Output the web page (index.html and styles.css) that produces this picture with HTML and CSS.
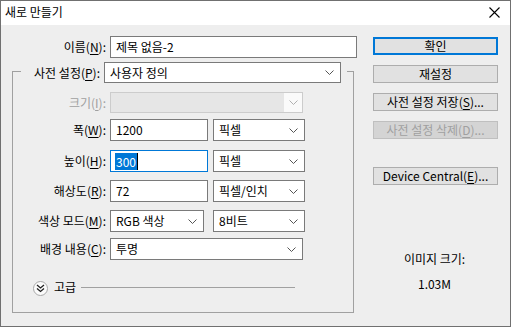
FILE: index.html
```html
<!DOCTYPE html>
<html>
    <head>
        <meta http-equiv="Content-Type" content="text/html; charset=utf-8" />
        <title>새로 만들기</title>
        <link rel="stylesheet" href="styles.css">
    </head>
    <body>
        <div class="dialog">
            <div class="titlebar">
                <span class="title">새로 만들기</span>
                <svg class="close" width="11" height="11" viewBox="0 0 11 11">
                    <path d="M0.5 0.5 L10.5 10.5 M10.5 0.5 L0.5 10.5" stroke="#000" stroke-width="1.1" fill="none"/>
                </svg>
            </div>
            <div class="content">
                <div class="main">
                    <div class="row name-row">
                        <span class="lbl">이름(<u>N</u>):</span>
                        <div class="field name-field">제목 없음-2</div>
                    </div>
                    <div class="group">
                        <div class="row preset-row">
                            <span class="lbl">사전 설정(<u>P</u>):</span>
                            <div class="field select preset-field">사용자 정의<svg class="arrow" width="9" height="5" viewBox="0 0 9 5"><polyline points="0.5,0.5 4.5,4.5 8.5,0.5"/></svg></div>
                        </div>
                        <div class="row size-row">
                            <span class="lbl disabled">크기(<u>I</u>):</span>
                            <div class="field select off long"><span class="arrow-box"><svg class="arrow" width="9" height="5" viewBox="0 0 9 5"><polyline points="0.5,0.5 4.5,4.5 8.5,0.5"/></svg></span></div>
                        </div>
                        <div class="row width-row">
                            <span class="lbl">폭(<u>W</u>):</span>
                            <div class="field num">1200</div>
                            <div class="field select unit">픽셀<svg class="arrow" width="9" height="5" viewBox="0 0 9 5"><polyline points="0.5,0.5 4.5,4.5 8.5,0.5"/></svg></div>
                        </div>
                        <div class="row height-row">
                            <span class="lbl">높이(<u>H</u>):</span>
                            <div class="field num focus"><span class="sel">300</span><span class="caret"></span></div>
                            <div class="field select unit">픽셀<svg class="arrow" width="9" height="5" viewBox="0 0 9 5"><polyline points="0.5,0.5 4.5,4.5 8.5,0.5"/></svg></div>
                        </div>
                        <div class="row res-row">
                            <span class="lbl">해상도(<u>R</u>):</span>
                            <div class="field num">72</div>
                            <div class="field select unit">픽셀/인치<svg class="arrow" width="9" height="5" viewBox="0 0 9 5"><polyline points="0.5,0.5 4.5,4.5 8.5,0.5"/></svg></div>
                        </div>
                        <div class="row mode-row">
                            <span class="lbl">색상 모드(<u>M</u>):</span>
                            <div class="field select mode">RGB 색상<svg class="arrow" width="9" height="5" viewBox="0 0 9 5"><polyline points="0.5,0.5 4.5,4.5 8.5,0.5"/></svg></div>
                            <div class="field select unit">8비트<svg class="arrow" width="9" height="5" viewBox="0 0 9 5"><polyline points="0.5,0.5 4.5,4.5 8.5,0.5"/></svg></div>
                        </div>
                        <div class="row bg-row">
                            <span class="lbl">배경 내용(<u>C</u>):</span>
                            <div class="field select long">투명<svg class="arrow" width="9" height="5" viewBox="0 0 9 5"><polyline points="0.5,0.5 4.5,4.5 8.5,0.5"/></svg></div>
                        </div>
                        <div class="advanced">
                            <span class="toggle">
                                <svg width="9" height="9" viewBox="0 0 9 9">
                                    <polyline points="1,1 4.5,4 8,1" />
                                    <polyline points="1,4.5 4.5,7.5 8,4.5" />
                                </svg>
                            </span>
                            <span class="adv-text">고급</span>
                            <span class="adv-line"></span>
                        </div>
                    </div>
                </div>
                <div class="side">
                    <div class="btn default">확인</div>
                    <div class="btn">재설정</div>
                    <div class="btn">사전 설정 저장(<u>S</u>)...</div>
                    <div class="btn off">사전 설정 삭제(<u>D</u>)...</div>
                    <div class="btn device">Device Central(<u>E</u>)...</div>
                    <div class="info">이미지 크기:</div>
                    <div class="info size">1.03M</div>
                </div>
            </div>
        </div>
    </body>
</html>
```

FILE: styles.css
```css
body {
    margin:         0px;
    font-size:      12px;
    line-height:    16px;
    font-family:    "Noto Sans CJK KR", "Noto Sans", sans-serif;
    color:          #000000;
}
u {
    text-decoration-thickness: 1px;
    text-underline-offset: 2px;
}

.dialog {
    width:          511px;
    height:         327px;
    box-sizing:     border-box;
    border:         1px solid #707070;
    background:     #eeeeee;
}
.titlebar {
    height:         24px;
    background:     #ffffff;
    display:        flex;
    align-items:    center;
    justify-content: space-between;
    padding:        0px 10px 0px 4px;
}
.titlebar .title {
    margin-top:     -2px;
}
.titlebar .close {
    margin-top:     -1px;
}

.content {
    display:        flex;
    padding-top:    11px;
}
.main {
    width:          356px;
}
.row {
    display:        flex;
    align-items:    center;
    gap:            4px;
}
.lbl {
    width:          93px;
    text-align:     right;
    white-space:    nowrap;
}
.lbl.disabled {
    color:          #a0a0a0;
}
.name-row .lbl {
    width:          105px;
}

.field {
    height:         22px;
    box-sizing:     border-box;
    border:         1px solid #7a7a7a;
    background:     #ffffff;
    padding:        0px 5px;
    display:        flex;
    align-items:    center;
    position:       relative;
    white-space:    nowrap;
}
.field.select {
    justify-content: space-between;
}
.field .arrow {
    fill:           none;
    stroke:         #555555;
    stroke-width:   1;
    margin-right:   1px;
}
.name-field {
    width:          247px;
}

.group {
    margin:         13px 0px 0px 11px;
    width:          342px;
    height:         242px;
    box-sizing:     border-box;
    border:         1px solid #a0a0a0;
}
.preset-row {
    margin:         -10px 0px 0px 8px;
    width:          326px;
    padding-right:  6px;
    box-sizing:     border-box;
    background:     #eeeeee;
}
.preset-row .lbl {
    width:          79px;
}
.preset-field {
    width:          237px;
    height:         21px;
}
.size-row {
    margin-top:     9px;
}
.width-row {
    margin-top:     6px;
}
.height-row {
    margin-top:     9px;
}
.res-row,
.mode-row {
    margin-top:     8px;
}
.bg-row {
    margin-top:     6px;
}

.field.long {
    width:          193px;
}
.field.off {
    height:         21px;
    border-color:   #cccccc;
    background:     #e6e6e6;
    padding:        0px;
    justify-content: flex-end;
}
.field.off .arrow-box {
    width:          18px;
    height:         19px;
    background:     #fafafa;
    display:        flex;
    align-items:    center;
    justify-content: center;
}
.field.off .arrow {
    stroke:         #b0b0b0;
    margin:         0px;
}
.field.num {
    width:          98px;
}
.field.unit {
    width:          92px;
    margin-left:    1px;
}
.field.mode {
    width:          94px;
    margin-right:   4px;
}
.field.focus {
    border-color:   #0078d7;
    padding-left:   4px;
}
.field .sel {
    background:     #0078d7;
    color:          #ffffff;
    line-height:    17px;
    padding:        0px 1px;
}
.field .caret {
    width:          1px;
    height:         17px;
    background:     #000000;
}

.advanced {
    display:        flex;
    align-items:    center;
    margin:         21px 0px 0px 20px;
}
.toggle {
    width:          15px;
    height:         15px;
    box-sizing:     border-box;
    border:         1px solid #a8a8a8;
    border-radius:  50%;
    background:     #fbfbfb;
    display:        flex;
    align-items:    center;
    justify-content: center;
}
.toggle polyline {
    fill:           none;
    stroke:         #222222;
    stroke-width:   1.3;
}
.adv-text {
    margin-left:    6px;
    margin-top:     -3px;
}
.adv-line {
    width:          214px;
    height:         1px;
    margin:         -3px 0px 0px 5px;
    background:     #a0a0a0;
}

.side {
    margin-left:    16px;
    width:          125px;
    padding-top:    1px;
}
.btn {
    height:         18px;
    box-sizing:     border-box;
    border:         1px solid #adadad;
    background:     #e1e1e1;
    display:        flex;
    align-items:    center;
    justify-content: center;
    margin-bottom:  10px;
    white-space:    nowrap;
}
.btn.default {
    border:         2px solid #0078d7;
}
.btn.off {
    background:     #d4d4d4;
    border-color:   #bfbfbf;
    color:          #a0a0a0;
}
.btn.device {
    margin-top:     28px;
}
.info {
    text-align:     center;
    padding-right:  2px;
}
.info:not(.size) {
    margin-top:     66px;
}
.info.size {
    margin-top:     9px;
}
```
